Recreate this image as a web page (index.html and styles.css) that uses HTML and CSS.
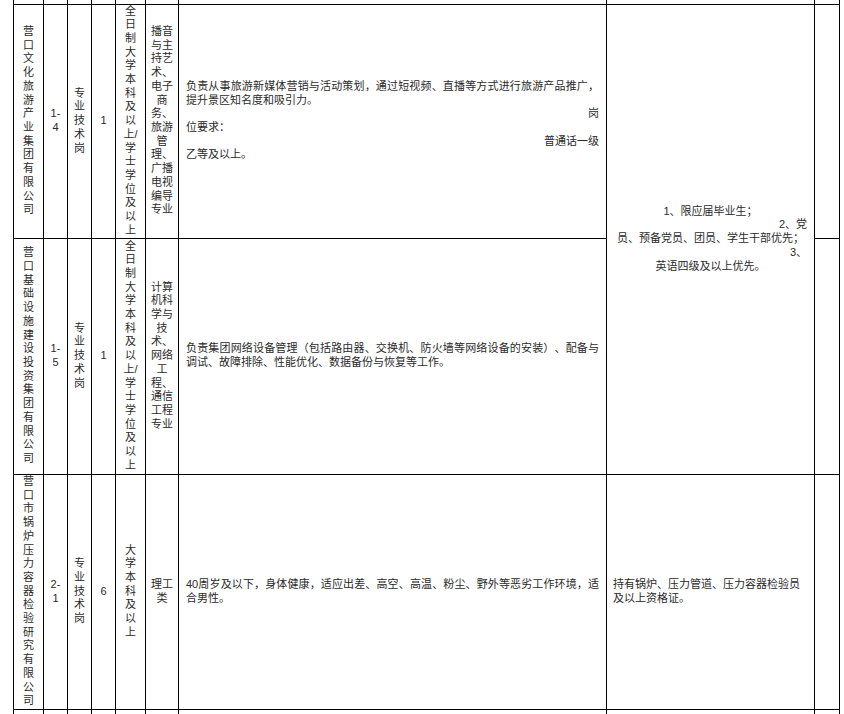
FILE: index.html
```html
<!DOCTYPE html>
<html lang="zh-CN">
<head>
<meta charset="utf-8">
<title>岗位表</title>
<link rel="stylesheet" href="styles.css">
</head>
<body>
<div class="page">
<table class="jobs">
<colgroup>
<col class="c-unit"><col class="c-code"><col class="c-type"><col class="c-num"><col class="c-edu"><col class="c-major"><col class="c-desc"><col class="c-req"><col class="c-note">
</colgroup>
<tbody>
<tr class="r-cut-top"><td></td><td></td><td></td><td></td><td></td><td></td><td></td><td></td><td></td></tr>
<tr class="r1">
<td class="unit">营口文化旅游产业集团有限公司</td>
<td class="code">1-4</td>
<td class="type">专业技术岗</td>
<td class="num">1</td>
<td class="edu">全日制大学本科及以上/学士学位及以上</td>
<td class="major">播音与主持艺术、电子商务、旅游管理、广播电视编导专业</td>
<td class="desc"><div class="para">负责从事旅游新媒体营销与活动策划，通过短视频、直播等方式进行旅游产品推广，提升景区知名度和吸引力。</div><div class="right">岗</div><div class="left">位要求：</div><div class="right">普通话一级</div><div class="left">乙等及以上。</div></td>
<td class="req" rowspan="2"><div class="mid">1、限应届毕业生；</div><div class="right">2、党</div><div class="mid">员、预备党员、团员、学生干部优先；</div><div class="right">3、</div><div class="mid">英语四级及以上优先。</div></td>
<td class="note"></td>
</tr>
<tr class="r2">
<td class="unit">营口基础设施建设投资集团有限公司</td>
<td class="code">1-5</td>
<td class="type">专业技术岗</td>
<td class="num">1</td>
<td class="edu">全日制大学本科及以上/学士学位及以上</td>
<td class="major">计算机科学与技术、网络工程、通信工程专业</td>
<td class="desc"><div class="para">负责集团网络设备管理（包括路由器、交换机、防火墙等网络设备的安装）、配备与调试、故障排除、性能优化、数据备份与恢复等工作。</div></td>
<td class="note"></td>
</tr>
<tr class="r3">
<td class="unit">营口市锅炉压力容器检验研究有限公司</td>
<td class="code">2-1</td>
<td class="type">专业技术岗</td>
<td class="num">6</td>
<td class="edu">大学本科及以上</td>
<td class="major">理工类</td>
<td class="desc"><div class="para">40周岁及以下，身体健康，适应出差、高空、高温、粉尘、野外等恶劣工作环境，适合男性。</div></td>
<td class="req req-left"><div class="left">持有锅炉、压力管道、压力容器检验员及以上资格证。</div></td>
<td class="note"></td>
</tr>
<tr class="r-cut-bottom"><td></td><td></td><td></td><td></td><td></td><td></td><td></td><td></td><td></td></tr>
</tbody>
</table>
</div>
</body>
</html>
```

FILE: styles.css
```css
html, body {
  margin: 0;
  background: #ffffff;
}

body {
  font-family: "Liberation Sans", "Noto Sans CJK SC", sans-serif;
  font-size: 11px;
  line-height: 13.7px;
  color: #2a2a2a;
  text-spacing-trim: space-all;
}

.page {
  padding-left: 13px;
}

.jobs {
  border-collapse: collapse;
  table-layout: fixed;
  width: 827px;
}

.jobs td {
  border: 1px solid #000;
  padding: 0;
  text-align: center;
  vertical-align: middle;
}

.c-unit { width: 30px; }
.c-code { width: 24px; }
.c-type { width: 24px; }
.c-num { width: 24px; }
.c-edu { width: 30px; }
.c-major { width: 33px; }
.c-desc { width: 428px; }
.c-req { width: 208px; }
.c-note { width: 25px; }

.r-cut-top { height: 4px; }
.r-cut-top td { border-top: 0; }
.r1 { height: 234px; }
.r2 { height: 236px; }
.r3 { height: 235px; }
.r-cut-bottom { height: 12px; }
.r-cut-bottom td { border-bottom: 0; }

.jobs td.unit,
.jobs td.edu {
  padding: 0 6px;
}

.jobs td.type {
  padding: 0 4px;
}

.jobs td.code {
  padding: 0 6px;
  word-break: break-all;
}

.jobs td.major {
  padding: 0 4px;
}

.jobs td.desc {
  padding: 0 7px;
  text-align: left;
}

.jobs td.req {
  padding: 0 7px;
}

.jobs td.req-left {
  padding: 0 6px;
}

.para {
  text-align: justify;
}

.left { text-align: left; }
.right { text-align: right; }
.mid { text-align: center; }
```
